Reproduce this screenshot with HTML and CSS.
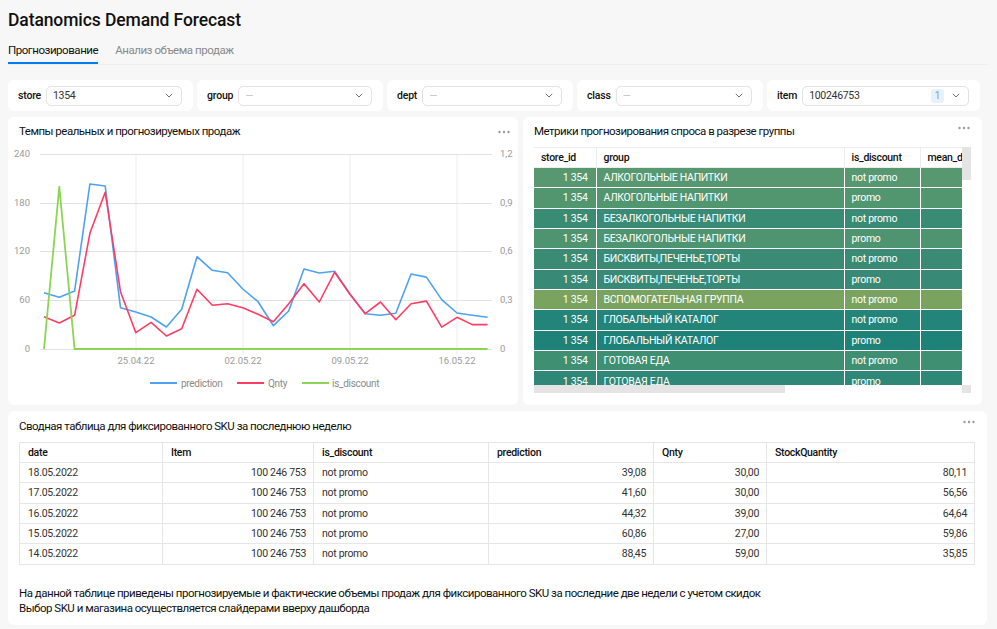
FILE: index.html
```html
<!DOCTYPE html>
<html lang="ru">
<head>
<meta charset="utf-8">
<title>Datanomics Demand Forecast</title>
<link rel="stylesheet" href="styles.css">
</head>
<body>
<header class="top">
  <h1 class="title">Datanomics Demand Forecast</h1>
  <nav class="tabs">
    <span class="tab active">Прогнозирование</span>
    <span class="tab">Анализ объема продаж</span>
  </nav>
</header>

<section class="filters">
  <div class="filter">
    <span class="flabel">store</span>
    <div class="select"><span class="sval">1354</span><svg class="chev" width="8" height="5" viewBox="0 0 8 5"><path d="M0.8 0.8 L4 4 L7.2 0.8" fill="none" stroke="#6f6f6f" stroke-width="1"/></svg></div>
  </div>
  <div class="filter">
    <span class="flabel">group</span>
    <div class="select"><span class="sval empty">—</span><svg class="chev" width="8" height="5" viewBox="0 0 8 5"><path d="M0.8 0.8 L4 4 L7.2 0.8" fill="none" stroke="#6f6f6f" stroke-width="1"/></svg></div>
  </div>
  <div class="filter">
    <span class="flabel">dept</span>
    <div class="select"><span class="sval empty">—</span><svg class="chev" width="8" height="5" viewBox="0 0 8 5"><path d="M0.8 0.8 L4 4 L7.2 0.8" fill="none" stroke="#6f6f6f" stroke-width="1"/></svg></div>
  </div>
  <div class="filter">
    <span class="flabel">class</span>
    <div class="select"><span class="sval empty">—</span><svg class="chev" width="8" height="5" viewBox="0 0 8 5"><path d="M0.8 0.8 L4 4 L7.2 0.8" fill="none" stroke="#6f6f6f" stroke-width="1"/></svg></div>
  </div>
  <div class="filter">
    <span class="flabel">item</span>
    <div class="select"><span class="sval">100246753</span><span class="badge">1</span><svg class="chev" width="8" height="5" viewBox="0 0 8 5"><path d="M0.8 0.8 L4 4 L7.2 0.8" fill="none" stroke="#6f6f6f" stroke-width="1"/></svg></div>
  </div>
</section>

<section class="main-row">
  <div class="widget chart-widget">
    <div class="whead">Темпы реальных и прогнозируемых продаж</div>
    <svg class="dots dots-chart" width="12" height="4" viewBox="0 0 12 4"><circle cx="1.5" cy="2" r="1.2"/><circle cx="6" cy="2" r="1.2"/><circle cx="10.5" cy="2" r="1.2"/></svg>
    <svg class="chart" width="510" height="260" viewBox="8 145 510 260">
      <g stroke="#ececec" stroke-width="1">
        <line x1="136" y1="154" x2="136" y2="355"/>
        <line x1="243" y1="154" x2="243" y2="355"/>
        <line x1="350" y1="154" x2="350" y2="355"/>
        <line x1="457" y1="154" x2="457" y2="355"/>
      </g>
      <g stroke="#e2e2e2" stroke-width="1">
        <line x1="40" y1="154.5" x2="492" y2="154.5"/>
        <line x1="40" y1="203.5" x2="492" y2="203.5"/>
        <line x1="40" y1="251.5" x2="492" y2="251.5"/>
        <line x1="40" y1="300.5" x2="492" y2="300.5"/>
        <line x1="40" y1="349.5" x2="492" y2="349.5"/>
      </g>
      <g class="axis" text-anchor="end">
        <text x="30" y="157">240</text>
        <text x="30" y="206">180</text>
        <text x="30" y="254">120</text>
        <text x="30" y="303">60</text>
        <text x="30" y="352">0</text>
      </g>
      <g class="axis" text-anchor="start">
        <text x="500" y="157">1,2</text>
        <text x="500" y="206">0,9</text>
        <text x="500" y="254">0,6</text>
        <text x="500" y="303">0,3</text>
        <text x="500" y="352">0</text>
      </g>
      <g class="axis" text-anchor="middle">
        <text x="136" y="364">25.04.22</text>
        <text x="243" y="364">02.05.22</text>
        <text x="350" y="364">09.05.22</text>
        <text x="457" y="364">16.05.22</text>
      </g>
      <polyline fill="none" stroke="#4da2f1" stroke-width="1.6" stroke-linejoin="round" points="44,292.7 59.3,297.3 74.6,291 89.9,184 105.2,186 120.5,307.7 135.8,312 151.1,317 166.4,327 181.7,309.3 197,256.7 212.3,270.3 227.6,272.7 242.8,289 258.1,301.7 273.4,325.7 288.7,311 304,269 319.3,273 334.6,271.3 349.9,293.7 365.2,313.7 380.5,315.3 395.8,313.3 411.1,274 426.4,277.1 441.7,299.6 457,313 472.3,315.2 487.6,317.2"/>
      <polyline fill="none" stroke="#ff3d64" stroke-width="1.6" stroke-linejoin="round" points="44,316.7 59.3,323 74.6,315.3 89.9,233.3 105.2,192.3 120.5,291.7 135.8,332.7 151.1,322.3 166.4,336 181.7,328.7 197,289.3 212.3,305.3 227.6,303.7 242.8,307.7 258.1,314.3 273.4,321.7 288.7,303.7 304,283.7 319.3,302 334.6,272.3 349.9,294.3 365.2,313.7 380.5,302 395.8,319.7 411.1,303.7 426.4,301.1 441.7,327.1 457,317.3 472.3,324.6 487.6,324.6"/>
      <polyline fill="none" stroke="#8ad554" stroke-width="1.8" stroke-linejoin="round" points="44,349 59.3,186.6 74.6,349 487.6,349"/>
      <g stroke-width="2">
        <line x1="150" y1="383" x2="177" y2="383" stroke="#4da2f1"/>
        <line x1="237" y1="383" x2="264" y2="383" stroke="#ff3d64"/>
        <line x1="302" y1="383" x2="329" y2="383" stroke="#8ad554"/>
      </g>
      <g class="legend">
        <text x="181" y="387">prediction</text>
        <text x="268" y="387">Qnty</text>
        <text x="332" y="387">is_discount</text>
      </g>
    </svg>
  </div>

  <div class="widget metrics-widget">
    <div class="whead">Метрики прогнозирования спроса в разрезе группы</div>
    <svg class="dots dots-metrics" width="12" height="4" viewBox="0 0 12 4"><circle cx="1.5" cy="2" r="1.2"/><circle cx="6" cy="2" r="1.2"/><circle cx="10.5" cy="2" r="1.2"/></svg>
    <div class="grid-frame">
      <div class="grid-view">
        <table class="mtable">
          <colgroup><col class="c-store"><col class="c-group"><col class="c-disc"><col class="c-mean"></colgroup>
          <thead>
            <tr><th>store_id</th><th>group</th><th>is_discount</th><th>mean_demand</th></tr>
          </thead>
          <tbody>
            <tr style="background:#579870"><td class="num">1 354</td><td>АЛКОГОЛЬНЫЕ НАПИТКИ</td><td>not promo</td><td></td></tr>
            <tr style="background:#529670"><td class="num">1 354</td><td>АЛКОГОЛЬНЫЕ НАПИТКИ</td><td>promo</td><td></td></tr>
            <tr style="background:#3a8b74"><td class="num">1 354</td><td>БЕЗАЛКОГОЛЬНЫЕ НАПИТКИ</td><td>not promo</td><td></td></tr>
            <tr style="background:#4e9470"><td class="num">1 354</td><td>БЕЗАЛКОГОЛЬНЫЕ НАПИТКИ</td><td>promo</td><td></td></tr>
            <tr style="background:#3b8b74"><td class="num">1 354</td><td>БИСКВИТЫ,ПЕЧЕНЬЕ,ТОРТЫ</td><td>not promo</td><td></td></tr>
            <tr style="background:#388a76"><td class="num">1 354</td><td>БИСКВИТЫ,ПЕЧЕНЬЕ,ТОРТЫ</td><td>promo</td><td></td></tr>
            <tr style="background:#7aa35f"><td class="num">1 354</td><td>ВСПОМОГАТЕЛЬНАЯ ГРУППА</td><td>not promo</td><td></td></tr>
            <tr style="background:#238579"><td class="num">1 354</td><td>ГЛОБАЛЬНЫЙ КАТАЛОГ</td><td>not promo</td><td></td></tr>
            <tr style="background:#1f8279"><td class="num">1 354</td><td>ГЛОБАЛЬНЫЙ КАТАЛОГ</td><td>promo</td><td></td></tr>
            <tr style="background:#3f9073"><td class="num">1 354</td><td>ГОТОВАЯ ЕДА</td><td>not promo</td><td></td></tr>
            <tr style="background:#2e8777"><td class="num">1 354</td><td>ГОТОВАЯ ЕДА</td><td>promo</td><td></td></tr>
          </tbody>
        </table>
      </div>
      <div class="vscroll"><div class="vthumb"></div></div>
      <div class="hscroll"><div class="hthumb"></div></div>
      <div class="corner"></div>
    </div>
  </div>
</section>

<section class="widget summary-widget">
  <div class="whead whead-summary">Сводная таблица для фиксированного SKU за последнюю неделю</div>
  <svg class="dots dots-summary" width="12" height="4" viewBox="0 0 12 4"><circle cx="1.5" cy="2" r="1.2"/><circle cx="6" cy="2" r="1.2"/><circle cx="10.5" cy="2" r="1.2"/></svg>
  <table class="stable">
    <colgroup><col class="s-date"><col class="s-item"><col class="s-disc"><col class="s-pred"><col class="s-qnty"><col class="s-stock"></colgroup>
    <thead>
      <tr><th>date</th><th>Item</th><th>is_discount</th><th>prediction</th><th>Qnty</th><th>StockQuantity</th></tr>
    </thead>
    <tbody>
      <tr><td>18.05.2022</td><td class="num">100 246 753</td><td>not promo</td><td class="num">39,08</td><td class="num">30,00</td><td class="num">80,11</td></tr>
      <tr><td>17.05.2022</td><td class="num">100 246 753</td><td>not promo</td><td class="num">41,60</td><td class="num">30,00</td><td class="num">56,56</td></tr>
      <tr><td>16.05.2022</td><td class="num">100 246 753</td><td>not promo</td><td class="num">44,32</td><td class="num">39,00</td><td class="num">64,64</td></tr>
      <tr><td>15.05.2022</td><td class="num">100 246 753</td><td>not promo</td><td class="num">60,86</td><td class="num">27,00</td><td class="num">59,86</td></tr>
      <tr><td>14.05.2022</td><td class="num">100 246 753</td><td>not promo</td><td class="num">88,45</td><td class="num">59,00</td><td class="num">35,85</td></tr>
    </tbody>
  </table>
  <p class="note">На данной таблице приведены прогнозируемые и фактические объемы продаж для фиксированного SKU за последние две недели с учетом скидок<br>Выбор SKU и магазина осуществляется слайдерами вверху дашборда</p>
</section>
</body>
</html>
```

FILE: styles.css
```css
* { box-sizing: border-box; }

body {
  margin: 0;
  width: 997px;
  height: 629px;
  overflow: hidden;
  background: #f7f7f7;
  font-family: Roboto, "Liberation Sans", Arial, sans-serif;
  color: #000;
}

/* header */
.top { padding: 0 8px; }

.title {
  margin: 0;
  padding-top: 8px;
  font-size: 17.5px;
  line-height: 24px;
  font-weight: 500;
  letter-spacing: -0.1px;
  color: #111;
}

.tabs {
  display: flex;
  gap: 17px;
  margin-top: 4px;
  border-bottom: 1px solid #eeeeee;
}

.tab {
  padding: 6px 0 4px;
  font-size: 11.5px;
  line-height: 16px;
  letter-spacing: -0.45px;
  color: #8a8a8a;
  border-bottom: 2px solid transparent;
}

.tab.active {
  color: #111;
  border-bottom-color: #027bf3;
}

/* filters */
.filters {
  display: grid;
  grid-template-columns: 185px 186px 186px 186px 213px;
  gap: 4px;
  padding: 0 8px;
  margin-top: 15px;
}

.filter {
  height: 31px;
  background: #fff;
  border-radius: 6px;
  display: flex;
  align-items: center;
  gap: 5px;
  padding: 0 11px 0 10px;
}

.flabel {
  font-size: 10.5px;
  font-weight: 500;
  letter-spacing: -0.2px;
  color: #111;
}

.select {
  flex: 1;
  height: 20px;
  border: 1px solid #e3e3e3;
  border-radius: 5px;
  display: flex;
  align-items: center;
  padding: 0 8px 0 6px;
  font-size: 10.5px;
  letter-spacing: -0.3px;
  color: #333;
}

.sval { flex: 1; }
.sval.empty { color: #c4c4c4; }

.badge {
  width: 13px;
  height: 14px;
  margin-right: 8px;
  border-radius: 3px;
  background: #e8f1fb;
  color: #7d9cc0;
  font-size: 10px;
  line-height: 14px;
  letter-spacing: 0;
  text-align: center;
}

.chev { display: block; flex: none; }

/* widgets */
.main-row {
  display: flex;
  gap: 5px;
  padding: 0 8px;
  margin-top: 6px;
}

.widget {
  position: relative;
  background: #fff;
  border-radius: 6px;
}

.chart-widget { width: 510px; height: 288px; }
.metrics-widget { width: 459px; height: 288px; }

.whead {
  padding: 6px 11px;
  font-size: 11.5px;
  line-height: 16px;
  letter-spacing: -0.5px;
  color: #111;
}

.dots { position: absolute; fill: #9a9a9a; }
.dots-chart { top: 13px; right: 8px; }
.dots-metrics { top: 9px; right: 12px; }
.dots-summary { top: 9px; right: 12px; }

.chart { display: block; }
.axis { font-size: 9.5px; fill: #9a9a9a; font-family: Roboto, "Liberation Sans", sans-serif; }
.legend { font-size: 10px; letter-spacing: -0.3px; fill: #8a8a8a; font-family: Roboto, "Liberation Sans", sans-serif; }

/* metrics grid */
.grid-frame {
  display: grid;
  grid-template-columns: 428px 9px;
  grid-template-rows: 238px 8px;
  margin: 2px 0 0 11px;
  width: 437px;
}

.grid-view { overflow: hidden; }

.mtable {
  border-collapse: collapse;
  table-layout: fixed;
  width: 470px;
  font-size: 10.5px;
  letter-spacing: -0.3px;
}

.c-store { width: 62px; }
.c-group { width: 248px; }
.c-disc { width: 76px; }
.c-mean { width: 84px; }

.mtable th {
  height: 20px;
  padding: 0 7px;
  text-align: left;
  font-weight: 500;
  color: #111;
  background: #fff;
  border: 1px solid #ececec;
  border-left: none;
  white-space: nowrap;
  overflow: hidden;
}

.mtable td {
  height: 20.33px;
  padding: 0 7px;
  color: #fff;
  white-space: nowrap;
  overflow: hidden;
  border-top: 1.5px solid rgba(255, 255, 255, 0.75);
  border-right: 1px solid rgba(255, 255, 255, 0.28);
}

.mtable td.num { text-align: right; padding-right: 8px; }

.vscroll { background: #fff; }
.vthumb { height: 33px; background: #e4e4e4; }

.hscroll { background: #fff; }
.hthumb { width: 251px; height: 8px; background: #e4e4e4; }

.corner { background: #e4e4e4; }

/* summary */
.summary-widget {
  width: 979px;
  height: 214px;
  margin: 6px 0 0 8px;
}

.whead-summary { padding: 7px 11px 8px; }

.stable {
  margin: 0 11px;
  width: 955px;
  border-collapse: collapse;
  table-layout: fixed;
  font-size: 10.5px;
  letter-spacing: -0.3px;
}

.s-date { width: 143px; }
.s-item { width: 151px; }
.s-disc { width: 175px; }
.s-pred { width: 165px; }
.s-qnty { width: 113px; }
.s-stock { width: 208px; }

.stable th,
.stable td {
  border: 1px solid #e6e6e6;
  padding: 0 7px 0 8px;
  height: 20.33px;
  text-align: left;
  white-space: nowrap;
}

.stable th { font-weight: 500; color: #111; height: 20px; }
.stable td { color: #333; }
.stable td.num { text-align: right; }

.note {
  margin: 21px 11px 0;
  font-size: 11.5px;
  line-height: 15px;
  letter-spacing: -0.5px;
  color: #111;
}
```
